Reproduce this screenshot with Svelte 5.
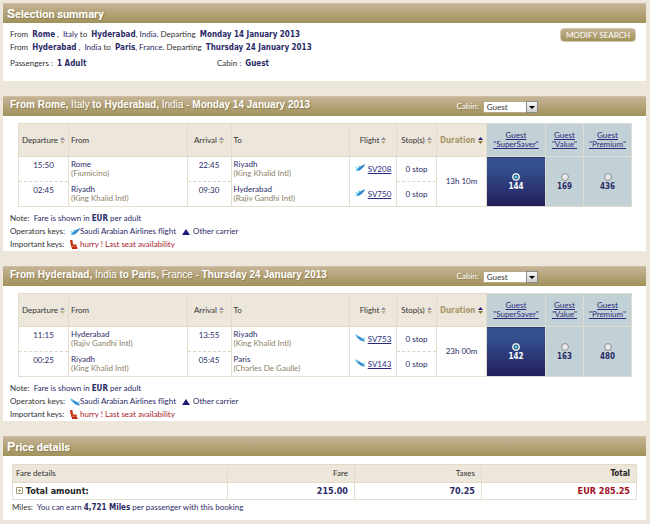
<script>
	let expanded = $state(false);

	const fareNames = ['SuperSaver', 'Value', 'Premium'];

	let bounds = $state([
		{
			id: 'outbound',
			from: 'Rome', fromCountry: 'Italy',
			to: 'Hyderabad', toCountry: 'India',
			date: 'Monday 14 January 2013',
			duration: '13h 10m',
			fares: [144, 169, 436],
			selected: 144,
			cabin: 'Guest',
			segments: [
				{dep: '15:50', from: 'Rome', fromAirport: 'Fiumicino', arr: '22:45', to: 'Riyadh', toAirport: 'King Khalid Intl', flight: 'SV208'},
				{dep: '02:45', from: 'Riyadh', fromAirport: 'King Khalid Intl', arr: '09:30', to: 'Hyderabad', toAirport: 'Rajiv Gandhi Intl', flight: 'SV750'}
			]
		},
		{
			id: 'inbound',
			from: 'Hyderabad', fromCountry: 'India',
			to: 'Paris', toCountry: 'France',
			date: 'Thursday 24 January 2013',
			duration: '23h 00m',
			fares: [142, 163, 480],
			selected: 142,
			cabin: 'Guest',
			segments: [
				{dep: '11:15', from: 'Hyderabad', fromAirport: 'Rajiv Gandhi Intl', arr: '13:55', to: 'Riyadh', toAirport: 'King Khalid Intl', flight: 'SV753'},
				{dep: '00:25', from: 'Riyadh', fromAirport: 'King Khalid Intl', arr: '05:45', to: 'Paris', toAirport: 'Charles De Gaulle', flight: 'SV143'}
			]
		}
	]);
</script>

{#snippet sort(active)}
	<svg class="sort" class:active width="5" height="7" viewBox="0 0 5 7" aria-hidden="true">
		<path class="up" d="M0 3 L2.5 0 L5 3z" />
		<path class="down" d="M0 4 L5 4 L2.5 7z" />
	</svg>
{/snippet}

{#snippet plane(id)}
	<svg class="plane" width="10" height="8" viewBox="0 0 10 8" aria-hidden="true">
		{#if id === 'outbound'}
			<path d="M1.4 6.2 L3 4 L7.4 1.2 L10 0.2 L9.6 1.8 L6.6 5 L4 6.8z" fill="#2f86cf" />
			<path d="M0 3.4 L1.4 3.2 L3.8 4.2 L2.8 5.6z M2.4 1.8 L6 2 L4.8 3.2z M0.8 6.2 L2.4 4.8 L4 6.8 L2 7.2z" fill="#5cc4e6" />
		{:else}
			<path d="M1 1 L3.4 2 L6 3.6 L8.8 5.6 L10 7.6 L7.6 7.2 L3.8 5 L1.6 3z" fill="#2f86cf" />
			<path d="M0 0.4 L1.8 0.8 L3.6 2.4 L3.2 4 L1.4 3z" fill="#5cc4e6" />
			<path d="M8 4.8 L9.6 3 L10 3.6 L9 5.8z M3.6 5.2 L7 7 L5.2 7z" fill="#5cc4e6" />
		{/if}
	</svg>
{/snippet}

<main>
	<section class="panel">
		<h2 class="bar">Selection summary</h2>
		<div class="summary">
			<div class="trips">
				{#each bounds as b (b.id)}
					<p>From &nbsp;<b>{b.from}</b> , &nbsp;<span class="navy">{b.fromCountry}</span> to &nbsp;<b>{b.to}</b>, <span class="navy">{b.toCountry}.</span> Departing &nbsp;<b>{b.date}</b></p>
				{/each}
				<div class="details">
					<p>Passengers : &nbsp;<b>1 Adult</b></p>
					<p>Cabin : &nbsp;<b>Guest</b></p>
				</div>
			</div>
			<button class="modify" type="button">MODIFY SEARCH</button>
		</div>
	</section>

	{#each bounds as b (b.id)}
		<section class="panel">
			<div class="bar split">
				<h3><strong>From {b.from},</strong> {b.fromCountry} <strong>to {b.to},</strong> {b.toCountry} - <strong>{b.date}</strong></h3>
				<div class="cabin">
					<label for="cabin-{b.id}">Cabin:</label>
					<div class="select">
						<select id="cabin-{b.id}" bind:value={b.cabin}>
							<option>Guest</option>
							<option>Business</option>
							<option>First</option>
						</select>
						<span class="arrow"></span>
					</div>
				</div>
			</div>
			<div class="flights">
				<table>
					<colgroup>
						<col class="c-dep" /><col /><col class="c-arr" /><col />
						<col class="c-flight" /><col class="c-stops" /><col class="c-duration" />
						<col class="c-saver" /><col class="c-value" /><col class="c-premium" />
					</colgroup>
					<thead>
						<tr>
							<th>Departure {@render sort(false)}</th>
							<th class="left">From</th>
							<th>Arrival {@render sort(false)}</th>
							<th class="left">To</th>
							<th>Flight {@render sort(false)}</th>
							<th>Stop(s) {@render sort(false)}</th>
							<th class="sorted">Duration {@render sort(true)}</th>
							{#each fareNames as name}
								<th class="fare"><a href="#fare">Guest<br />"{name}"</a></th>
							{/each}
						</tr>
					</thead>
					<tbody>
						{#each b.segments as s, i}
							<tr class:first={i === 0}>
								<td class="time">{s.dep}</td>
								<td class="left">{s.from}<br /><span class="airport">({s.fromAirport})</span></td>
								<td class="time">{s.arr}</td>
								<td class="left">{s.to}<br /><span class="airport">({s.toAirport})</span></td>
								<td class="flight">{@render plane(b.id)}<a href="#flight">{s.flight}</a></td>
								<td class="stops">0 stop</td>
								{#if i === 0}
									<td rowspan="2">{b.duration}</td>
									{#each b.fares as fare}
										<td rowspan="2" class="fare" class:selected={b.selected === fare}>
											<label>
												<input type="radio" name="fare-{b.id}" value={fare} bind:group={b.selected} />
												{fare}
											</label>
										</td>
									{/each}
								{/if}
							</tr>
						{/each}
					</tbody>
				</table>
			</div>
			<div class="keys">
				<p>Note: &nbsp;<span class="navy">Fare is shown in <b>EUR</b> per adult</span></p>
				<p>
					<span class="key">Operators keys:</span>
					{@render plane(b.id)}<span class="navy">Saudi Arabian Airlines flight</span>
					<svg class="carrier" width="8" height="6" viewBox="0 0 8 6" aria-hidden="true"><path d="M0 6 L4 0 L8 6z" fill="#1c1c7c" /></svg>
					<span class="navy">Other carrier</span>
				</p>
				<p>
					<span class="key">Important keys:</span>
					<svg class="seat" width="8" height="9" viewBox="0 0 8 9" aria-hidden="true">
						<path d="M0 0 L2.4 0 L3 4.4 L6.6 4.4 L6.6 7 L7.4 7 L7.4 9 L2 9 L2 7.6 L1.2 7 z" fill="#c42a08" />
						<path d="M1.6 6.2 h4" stroke="#f0b8a8" stroke-width="0.6" />
					</svg>
					<span class="hurry">hurry ! Last seat availability</span>
				</p>
			</div>
		</section>
	{/each}

	<section class="panel">
		<h2 class="bar">Price details</h2>
		<div class="price">
			<table>
				<colgroup><col /><col class="p-fare" /><col class="p-fare" /><col class="p-total" /></colgroup>
				<thead>
					<tr><th class="left">Fare details</th><th>Fare</th><th>Taxes</th><th><b>Total</b></th></tr>
				</thead>
				<tbody>
					<tr>
						<th class="left total">
							<button class="expand" type="button" aria-label="Show fare details" aria-expanded={expanded} onclick={() => (expanded = !expanded)}>
								<svg width="7" height="7" viewBox="0 0 7 7"><path d="M0.5 0.5h6v6h-6z M2 3.5h3 M3.5 2v3" fill="none" stroke="#a89c78" /></svg>
							</button>
							Total amount:
						</th>
						<td>215.00</td>
						<td>70.25</td>
						<td class="sum">EUR 285.25</td>
					</tr>
				</tbody>
			</table>
			<p>Miles: &nbsp;<span class="navy">You can earn <b>4,721 Miles</b> per passenger with this booking</span></p>
		</div>
	</section>
</main>

<style>
	:global(body) {
		background: #ede6db;
	}

	main {
		display: flex;
		flex-direction: column;
		gap: 15px;
		padding: 3px 4px 4px 3px;
		font-family: Lato, Tahoma, sans-serif;
		font-size: 8px;
		line-height: 13px;
		color: #333;
	}

	p, h2, h3 {
		margin: 0;
		white-space: nowrap;
	}

	b, .sorted, .fare label, .price td, .total {
		font-family: 'DejaVu Sans Condensed', Tahoma, sans-serif;
	}

	b, .navy {
		color: #2a2a66;
	}

	a {
		color: #2a2a7c;
	}

	.panel {
		background: #fff;
	}

	.bar {
		box-sizing: border-box;
		height: 20px;
		padding: 0 7px 0 4px;
		background: linear-gradient(#c5b395, #a0925a);
		border-top: 1px solid #cdbfa5;
		color: #fff;
		line-height: 19px;
		text-shadow: 1px 1px 1px #8a7c50;
	}

	h2.bar {
		font-family: Roboto, Tahoma, sans-serif;
		font-size: 11px;
	}

	h2.bar::first-letter {
		font-size: 13px;
	}

	.split {
		display: grid;
		grid-template-columns: 71fr 29fr;
		padding-left: 7px;
	}

	h3 {
		font-family: 'Liberation Sans', Arial, sans-serif;
		font-size: 10px;
		line-height: 15px;
		font-weight: normal;
	}

	.cabin {
		display: flex;
		align-items: center;
		gap: 4px;
	}

	.select {
		position: relative;
		display: flex;
	}

	select {
		appearance: none;
		width: 55px;
		height: 12px;
		padding: 0 12px 0 3px;
		border: 1px solid #b5aa88;
		border-radius: 0;
		background: #fff;
		color: #333;
		font: inherit;
		line-height: 10px;
	}

	.arrow {
		position: absolute;
		top: 0;
		right: 0;
		width: 10px;
		height: 10px;
		border: 1px solid #8b8b8b;
		background: linear-gradient(#f6f6f6, #cfcfcf);
		pointer-events: none;
	}

	.arrow::after {
		content: '';
		position: absolute;
		top: 4px;
		left: 2px;
		border: solid transparent;
		border-width: 3px 3px 0;
		border-top-color: #000;
	}

	.summary {
		display: flex;
		justify-content: space-between;
		align-items: flex-start;
		padding: 5px 10px 11px 7px;
	}

	.trips {
		flex: 1;
	}

	.details {
		display: grid;
		grid-template-columns: 207px 1fr;
		margin-top: 3px;
	}

	.modify {
		width: 76px;
		height: 14px;
		padding: 0;
		border: 1px solid #d3c8ae;
		border-radius: 4px;
		background: linear-gradient(#c2b08f, #a0925a);
		color: #fff;
		font: inherit;
		line-height: 12px;
	}

	table {
		width: 100%;
		table-layout: fixed;
		border-collapse: collapse;
		line-height: 9px;
	}

	th, td {
		padding: 0;
		border: 1px solid #e6dfd0;
		font-weight: normal;
		text-align: center;
		white-space: nowrap;
	}

	thead th {
		background: #ede6db;
		border-color: #e3dac8;
	}

	.flights {
		padding: 7px 14px 0 15px;
	}

	.c-dep { width: 50px; }
	.c-arr { width: 44px; }
	.c-flight { width: 47px; }
	.c-stops { width: 40px; }
	.c-duration { width: 50px; }
	.c-saver { width: 59px; }
	.c-value { width: 38px; }
	.c-premium { width: 48px; }

	.flights th {
		height: 32px;
	}

	.flights td {
		height: 24px;
		color: #2a2a66;
	}

	.flights .left {
		padding-left: 2px;
		text-align: left;
	}

	.first td:not([rowspan]) {
		border-bottom: none;
	}

	.first + tr td {
		border-top: none;
	}

	.first td.time:not([rowspan]), .first td.stops:not([rowspan]) {
		border-bottom: 1px dashed #ddd5c0;
	}

	.flights .time {
		height: 16px;
		padding-bottom: 8px;
	}

	.flights .airport {
		color: #8b7f66;
	}

	.flight a {
		margin-left: 3px;
	}

	.sort {
		vertical-align: -1px;
	}

	.up { fill: #8f8fa8; }
	.down { fill: #c0b48c; }
	.active .up { fill: #1c1c6c; }
	.active .down { fill: #8e7a36; }

	.flights .sorted {
		color: #a8976a;
		font-weight: bold;
	}

	.flights .fare {
		background: #c2d1d5;
		border-color: #dcdcd2;
	}

	.fare label {
		display: flex;
		flex-direction: column;
		align-items: center;
		font-weight: bold;
	}

	.flights .selected {
		background: linear-gradient(#34508f 20%, #241d5c);
		color: #fff;
	}

	input {
		appearance: none;
		width: 8px;
		height: 8px;
		margin: 0 0 1px;
		border: 1px solid #8d9297;
		border-radius: 50%;
		background: radial-gradient(#eee, #ddd);
	}

	input:checked {
		border-color: #e8eef2;
		background: radial-gradient(#6fd0ee 20%, #14506e 45%, #dde6ea 70%);
	}

	.keys {
		padding: 5px 7px 0;
	}

	.keys p {
		display: flex;
		align-items: center;
		white-space: pre;
	}

	.key {
		width: 60px;
	}

	.carrier {
		margin: 0 3px 0 6px;
	}

	.seat {
		margin-right: 2px;
	}

	.hurry {
		color: #a8202c;
	}

	.price {
		padding: 8px 9px 6px;
	}

	.p-fare { width: 127px; }
	.p-total { width: 155px; }

	.price th, .price td {
		height: 17px;
		padding-right: 6px;
		text-align: right;
	}

	.price td, .price .total {
		height: 16px;
		color: #2a2a66;
		font-size: 9px;
		font-weight: bold;
	}

	.price .left {
		padding-left: 3px;
		text-align: left;
	}

	.price .total, thead b {
		color: #222;
	}

	.price .sum {
		color: #a0101c;
	}

	.price p {
		margin-top: 1px;
	}

	.expand {
		padding: 0;
		border: 0;
		background: none;
		line-height: 7px;
	}
</style>
